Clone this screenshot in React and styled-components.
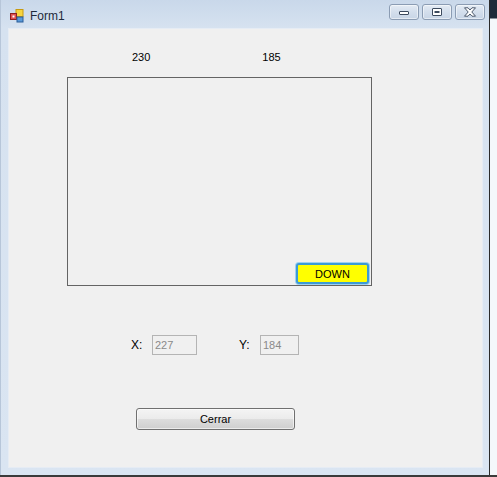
import styled, { createGlobalStyle } from "styled-components";

const GlobalStyle = createGlobalStyle`
  html, body {
    margin: 0;
    padding: 0;
    background: #3a3a3a;
  }
  body {
    font-family: "Liberation Sans", Arial, sans-serif;
  }
`;

const FormIcon = () => (
  <svg width="14" height="14" viewBox="0 0 14 14">
    <rect x="6" y="0.5" width="7" height="7" fill="#f7d440" stroke="#c79a10" />
    <rect x="0.5" y="4.5" width="6" height="6" fill="#e05050" stroke="#8c2020" />
    <rect x="2.5" y="6.5" width="2" height="2" fill="#fff" />
    <rect x="7" y="8" width="6" height="5" fill="#5b9ad8" stroke="#2a5c99" />
  </svg>
);

const MinGlyph = () => (
  <svg width="12" height="8" viewBox="0 0 12 8">
    <rect x="1.5" y="3.5" width="9" height="3" rx="0.5" fill="#fff" stroke="#3c4a5e" />
  </svg>
);

const MaxGlyph = () => (
  <svg width="12" height="10" viewBox="0 0 12 10">
    <rect x="1.5" y="1.5" width="9" height="7" rx="0.5" fill="#fff" stroke="#3c4a5e" />
    <rect x="3.5" y="4" width="5" height="2" fill="#3c4a5e" />
  </svg>
);

const CloseGlyph = () => (
  <svg width="14" height="10" viewBox="0 0 14 10">
    <path
      d="M1.5 0.8 L5 0.8 L7 3 L9 0.8 L12.5 0.8 L8.8 5 L12.5 9.2 L9 9.2 L7 7 L5 9.2 L1.5 9.2 L5.2 5 Z"
      fill="#fff"
      stroke="#3c4a5e"
      strokeWidth="0.9"
      strokeLinejoin="round"
    />
  </svg>
);

const App = () => {
  return (
    <>
      <GlobalStyle />
      <Screen>
        <Window>
          <TitleBar>
            <FormIcon />
            <Caption>Form1</Caption>
            <CaptionButtons>
              <CaptionButton>
                <MinGlyph />
              </CaptionButton>
              <CaptionButton>
                <MaxGlyph />
              </CaptionButton>
              <CaptionButton>
                <CloseGlyph />
              </CaptionButton>
            </CaptionButtons>
          </TitleBar>
          <Client>
            <CoordRow>
              <CoordLabel $left={123}>230</CoordLabel>
              <CoordLabel $left={112}>185</CoordLabel>
            </CoordRow>
            <Panel>
              <DownButton>DOWN</DownButton>
            </Panel>
            <FieldRow>
              <FieldLabel>X:</FieldLabel>
              <TextBox $width={45} value="227" disabled readOnly />
              <FieldLabel $gap={42}>Y:</FieldLabel>
              <TextBox $width={39} value="184" disabled readOnly />
            </FieldRow>
            <CloseButton>Cerrar</CloseButton>
          </Client>
        </Window>
        <Desktop />
      </Screen>
    </>
  );
};

const Screen = styled.div`
  display: flex;
  width: 497px;
  height: 477px;
  overflow: hidden;
`;

const Window = styled.div`
  display: flex;
  flex-direction: column;
  width: 489px;
  height: 475px;
  box-sizing: border-box;
  background: linear-gradient(180deg, #c9d8ea 0px, #d6e2f0 28px, #dae5f2 100%);
  border-left: 1px solid #b7c6d9;
`;

const Desktop = styled.div`
  flex: 1;
  height: 475px;
  border-left: 1px solid #2b2b2b;
  background: linear-gradient(180deg, #1e2a3a 0px, #1e2a3a 18px, #f4f7fb 19px, #f4f7fb 100%);
`;

const TitleBar = styled.div`
  display: flex;
  align-items: center;
  height: 28px;
  padding: 4px 4px 0 9px;
  box-sizing: border-box;
`;

const Caption = styled.span`
  margin-left: 6px;
  font-size: 12px;
  color: #1e2a3c;
`;

const CaptionButtons = styled.div`
  display: flex;
  gap: 3px;
  margin-left: auto;
  margin-top: -8px;
`;

const CaptionButton = styled.div`
  display: flex;
  align-items: center;
  justify-content: center;
  width: 30px;
  height: 16px;
  box-sizing: border-box;
  border: 1px solid #8b9cb3;
  border-radius: 3px;
  background: linear-gradient(180deg, #e4ebf4 0%, #d3deec 50%, #c8d5e6 100%);
  box-shadow: inset 0 0 0 1px rgba(255, 255, 255, 0.5);
`;

const Client = styled.div`
  display: flex;
  flex-direction: column;
  margin: 0 6px 7px 7px;
  flex: 1;
  background: #f0f0f0;
  border: 1px solid #e6ecf4;
`;

const CoordRow = styled.div`
  display: flex;
  padding-top: 22px;
  height: 14px;
`;

const CoordLabel = styled.span`
  margin-left: ${(p) => p.$left}px;
  font-size: 11px;
  color: #000;
`;

const Panel = styled.div`
  display: flex;
  align-items: flex-end;
  justify-content: flex-end;
  margin: 12px 0 0 58px;
  width: 305px;
  height: 209px;
  box-sizing: border-box;
  border: 1px solid #646464;
  padding: 0 2px 1px 0;
`;

const DownButton = styled.button`
  width: 73px;
  height: 21px;
  box-sizing: border-box;
  background: #ffff00;
  border: 2px solid #3c9ad6;
  border-radius: 3px;
  box-shadow: 0 0 0 1px #9fd0f0;
  font-family: "Liberation Sans", Arial, sans-serif;
  font-size: 11px;
  color: #000;
  padding: 0;
`;

const FieldRow = styled.div`
  display: flex;
  align-items: center;
  margin-top: 49px;
  padding-left: 122px;
  height: 20px;
`;

const FieldLabel = styled.span`
  margin-left: ${(p) => p.$gap || 0}px;
  width: 21px;
  font-size: 12px;
  color: #000;
`;

const TextBox = styled.input`
  width: ${(p) => p.$width}px;
  height: 20px;
  box-sizing: border-box;
  border: 1px solid #b4b4b4;
  background: #f0f0f0;
  color: #8a8a8a;
  font-family: "Liberation Sans", Arial, sans-serif;
  font-size: 11px;
  padding: 0 2px;
  margin: 0;
`;

const CloseButton = styled.button`
  margin: 53px 0 0 127px;
  width: 159px;
  height: 22px;
  box-sizing: border-box;
  border: 1px solid #707070;
  border-radius: 3px;
  background: linear-gradient(180deg, #f4f4f4 0%, #ebebeb 50%, #dddddd 51%, #cfcfcf 100%);
  box-shadow: inset 0 0 0 1px rgba(255, 255, 255, 0.6);
  font-family: "Liberation Sans", Arial, sans-serif;
  font-size: 11px;
  color: #000;
  padding: 0;
`;

export default App;
